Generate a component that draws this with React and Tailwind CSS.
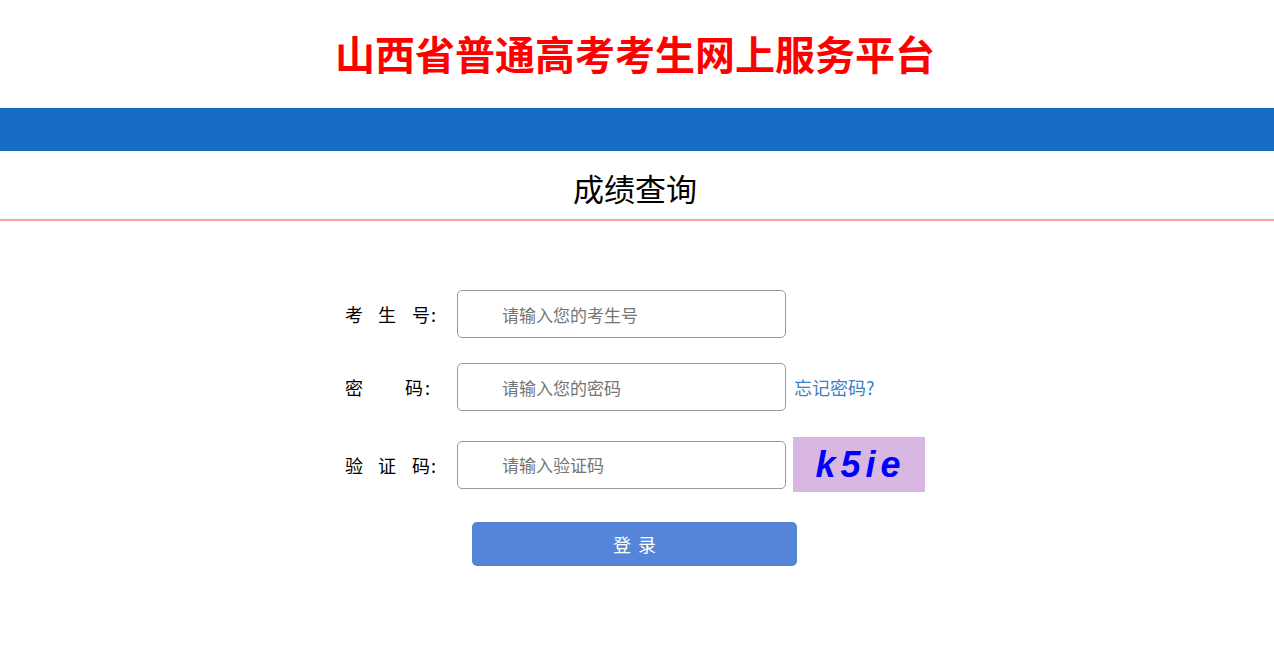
const cjk = "font-['Noto_Sans_CJK_SC','Noto_Sans',sans-serif]"

const Label = ({ chars }) => (
  <div className="relative w-[112px] h-[24px] text-[18px] leading-[24px] text-black shrink-0">
    {chars.map(([c, x]) => (
      <span key={x} className="absolute top-0" style={{ left: x }}>{c}</span>
    ))}
  </div>
)

const Field = ({ placeholder }) => (
  <input
    placeholder={placeholder}
    className="w-[329px] h-[48px] rounded-[5px] border border-[#999] pl-[44px] text-[17px] text-black placeholder:text-[#757575] outline-none shrink-0"
  />
)

export default function App() {
  return (
    <div className={`${cjk} bg-white min-h-[655px]`}>
      <div className="h-[108px] flex items-center justify-center">
        <h1 className="text-[40px] font-bold text-[#ff0000] leading-none -mt-[2px] mr-[4px]">
          山西省普通高考考生网上服务平台
        </h1>
      </div>
      <div className="h-[43px] bg-[#166bc2]" />
      <div className="h-[70px] flex items-center justify-center border-b-2 border-[#f5a3a3]">
        <h2 className="text-[31px] text-black leading-none mt-[4px] mr-[4px]">成绩查询</h2>
      </div>

      <div className="flex justify-center pt-[69px]">
        <div className="w-[584px] flex flex-col">
          <div className="flex items-center h-[48px]">
            <Label chars={[['考', 0], ['生', 33], ['号', 67], [':', 86]]} />
            <Field placeholder="请输入您的考生号" />
          </div>
          <div className="flex items-center h-[48px] mt-[25px]">
            <Label chars={[['密', 0], ['码', 60], [':', 80]]} />
            <Field placeholder="请输入您的密码" />
            <a href="#" className="ml-[8px] text-[18px] text-[#3c80c6]">忘记密码?</a>
          </div>
          <div className="flex items-center h-[55px] mt-[26px]">
            <Label chars={[['验', 0], ['证', 33], ['码', 67], [':', 86]]} />
            <Field placeholder="请输入验证码" />
            <div className="ml-[7px] w-[132px] h-[55px] bg-[#d8b8e2] flex items-center justify-center">
              <span className="font-['Liberation_Sans',sans-serif] italic font-bold text-[36px] text-[#0000ff] tracking-[5px] leading-none pl-[3px]">
                k5ie
              </span>
            </div>
          </div>
          <button className="ml-[127px] mt-[30px] w-[325px] h-[44px] rounded-[5px] bg-[#5585d9] text-white text-[18px] tracking-[7px] pl-[7px]">
            登录
          </button>
        </div>
      </div>
    </div>
  )
}
